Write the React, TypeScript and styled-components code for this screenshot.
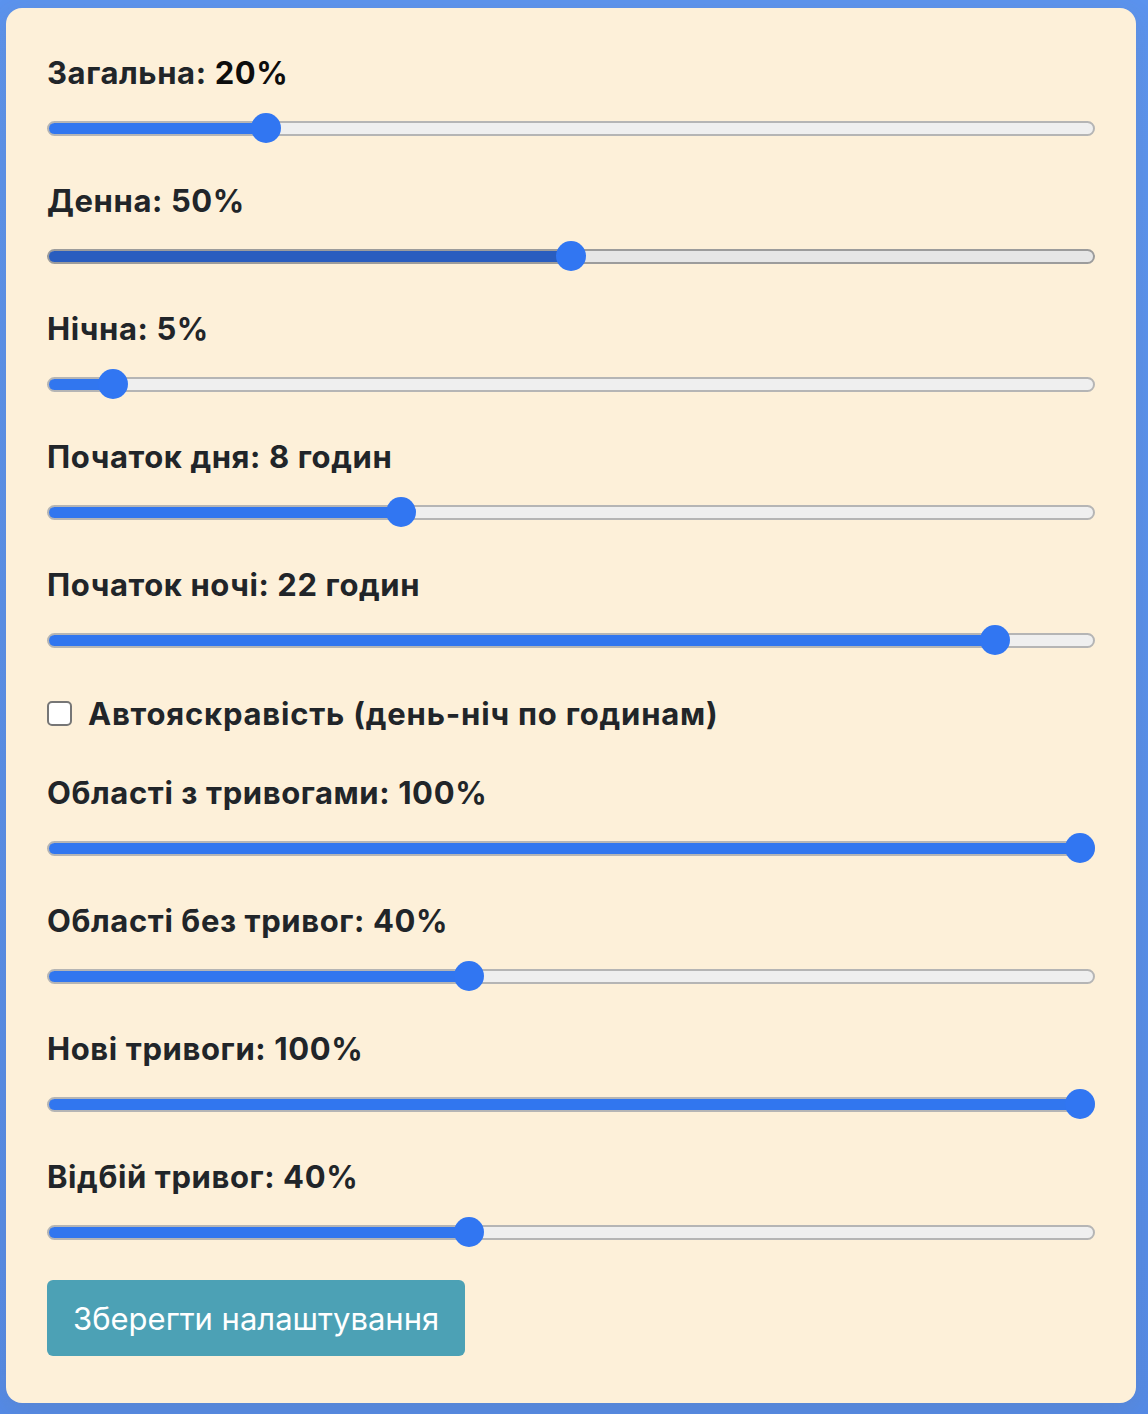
import React from "react";
import styled, { createGlobalStyle } from "styled-components";

const Global = createGlobalStyle`
  html, body { margin: 0; padding: 0; }
  body {
    background: linear-gradient(180deg, #5b93ee 0%, #548ae6 100%);
    font-family: Inter, "Noto Sans", "DejaVu Sans", sans-serif;
    min-height: 1414px;
  }
  #root { padding: 8px 12px 11px 6px; }
`;

const Card = styled.div`
  background: #fdf0d9;
  border-radius: 16px;
  padding: 48px 41px 47px 41px;
  box-shadow: 0 6px 24px rgba(120, 100, 60, 0.12);
  display: flex;
  flex-direction: column;
`;

const Group = styled.div`
  display: flex;
  flex-direction: column;
  margin-bottom: 41px;
  &:last-of-type { margin-bottom: 0; }
`;

const Label = styled.div`
  font-size: 31px;
  font-weight: 700;
  letter-spacing: 0.6px;
  line-height: 34px;
  color: #212529;
  margin-bottom: 23px;
  white-space: nowrap;
`;

const Value = styled.span<{ $dark?: boolean }>`
  color: ${(p) => (p.$dark ? "#0d0d0d" : "inherit")};
`;

const SliderBox = styled.div`
  position: relative;
  height: 30px;
  display: flex;
  align-items: center;
`;

const Track = styled.div<{ $active?: boolean }>`
  position: relative;
  width: 100%;
  height: 15px;
  box-sizing: border-box;
  border: 2px solid ${(p) => (p.$active ? "#9c9c9c" : "#b5b5b5")};
  background: ${(p) => (p.$active ? "#e6e6e6" : "#efefef")};
  border-radius: 8px;
  overflow: hidden;
`;

const Fill = styled.div<{ $active?: boolean }>`
  position: absolute;
  left: -2px;
  top: -2px;
  bottom: -2px;
  background: ${(p) => (p.$active ? "#295dbf" : "#3176ef")};
  border: 2px solid ${(p) => (p.$active ? "#2c529a" : "#4d72b3")};
  border-right: none;
  border-radius: 8px 0 0 8px;
  box-sizing: border-box;
`;

const Thumb = styled.div`
  position: absolute;
  top: 0;
  width: 30px;
  height: 30px;
  border-radius: 50%;
  background: #3176f2;
  margin-left: -15px;
`;

const CheckRow = styled.label`
  display: flex;
  align-items: center;
  gap: 16px;
  height: 34px;
  margin: 0 0 46px 0;
  font-size: 31px;
  font-weight: 700;
  letter-spacing: 0.8px;
  color: #212529;
  white-space: nowrap;
`;

const CheckBox = styled.span`
  width: 25px;
  height: 25px;
  box-sizing: border-box;
  border: 2px solid #767676;
  border-radius: 5px;
  background: #fff;
  flex: none;
`;

const Button = styled.button`
  align-self: flex-start;
  margin-top: 33px;
  height: 76px;
  padding: 0 26px;
  border: none;
  border-radius: 6px;
  background: #4ca1b5;
  color: #fff;
  font-family: Inter, "Noto Sans", sans-serif;
  font-size: 31px;
  letter-spacing: 0;
  font-weight: 400;
`;

type S = { label: string; value: number; max: number; unit: string; active?: boolean; dark?: boolean };

const Slider: React.FC<{ value: number; max: number; active?: boolean }> = ({ value, max, active }) => {
  const frac = value / max;
  const thumbPx = 15 + frac * 1018;
  return (
    <SliderBox>
      <Track $active={active}>
        <Fill $active={active} style={{ width: thumbPx + 2 }} />
      </Track>
      <Thumb style={{ left: thumbPx }} />
    </SliderBox>
  );
};

const SliderGroup: React.FC<S> = ({ label, value, max, unit, active, dark }) => (
  <Group>
    <Label>
      {label}: <Value $dark={dark}>{value}{unit}</Value>
    </Label>
    <Slider value={value} max={max} active={active} />
  </Group>
);

const first: S[] = [
  { label: "Загальна", value: 20, max: 100, unit: "%", dark: true },
  { label: "Денна", value: 50, max: 100, unit: "%", active: true },
  { label: "Нічна", value: 5, max: 100, unit: "%" },
  { label: "Початок дня", value: 8, max: 24, unit: " годин" },
  { label: "Початок ночі", value: 22, max: 24, unit: " годин" },
];

const second: S[] = [
  { label: "Області з тривогами", value: 100, max: 100, unit: "%" },
  { label: "Області без тривог", value: 40, max: 100, unit: "%" },
  { label: "Нові тривоги", value: 100, max: 100, unit: "%" },
  { label: "Відбій тривог", value: 40, max: 100, unit: "%" },
];

const Section = styled.div`
  display: flex;
  flex-direction: column;
  margin-bottom: 41px;
`;

const Section2 = styled.div`
  display: flex;
  flex-direction: column;
`;

export default function App() {
  return (
    <>
      <Global />
      <Card>
        <Section>
          {first.map((s) => (
            <SliderGroup key={s.label} {...s} />
          ))}
        </Section>
        <CheckRow>
          <CheckBox />
          Автояскравість (день-ніч по годинам)
        </CheckRow>
        <Section2>
          {second.map((s) => (
            <SliderGroup key={s.label} {...s} />
          ))}
        </Section2>
        <Button>Зберегти налаштування</Button>
      </Card>
    </>
  );
}
